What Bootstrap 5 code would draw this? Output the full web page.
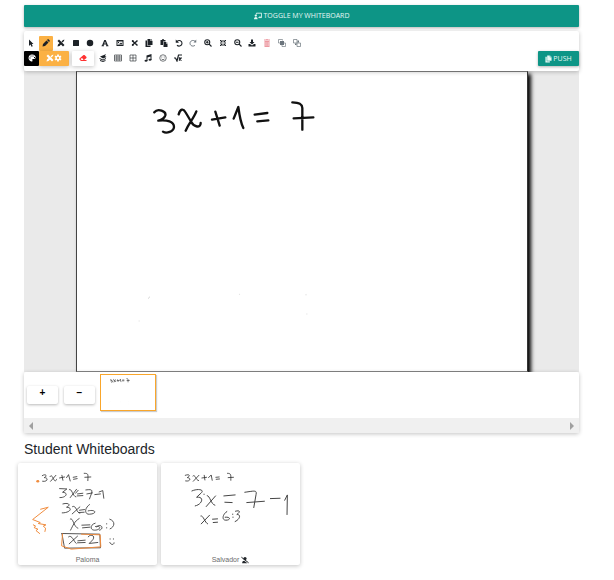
<!DOCTYPE html>
<html lang="en">
<head>
<meta charset="utf-8">
<meta name="viewport" content="width=device-width, initial-scale=1">
<title>Whiteboard</title>
<link href="https://cdn.jsdelivr.net/npm/bootstrap@5.3.0/dist/css/bootstrap.min.css" rel="stylesheet">
<style>
body{font-family:"Liberation Sans",Arial,sans-serif;font-size:7px;line-height:10px;color:#212529;background:#fff}
.page{padding:5px 35px 10px 24px}
.raised{box-shadow:0 1px 4px rgba(0,0,0,.24)}
.teal,.teal:hover{background:#0d9586;color:#e8f8f5;font-family:"Open Sans",sans-serif;font-size:7px;line-height:10px;border:0;border-radius:1px;box-shadow:0 1px 3px rgba(0,0,0,.3)}
.toggle{height:22px;gap:2px}
.push{height:15px;width:41px;gap:1px}
.ico{width:8px;height:8px;fill:currentColor;stroke:none;display:block;flex:none}
.push .ico{width:7px}
.panel{background:#fff;padding:5px 0;position:relative;z-index:1;border-radius:2px}
.tools{display:grid;grid-template-columns:repeat(19,minmax(0,1fr));width:280px}
.tool{height:15px;padding:0 0 2px;border:0;background:transparent;color:#1d2227;display:flex;align-items:center;justify-content:center;border-radius:1px}
.more{display:grid;grid-template-columns:repeat(6,minmax(0,1fr));width:89px;margin-left:2px}
.amber{background:#fbb144}
.wide{width:30px;color:#fff}
.black{width:15px;background:#000;color:#fff}
.erase{width:22px;margin-left:3px;background:#fff;color:#f33}
.stage{background:#eaeaea;padding:0 51px 0 52px;overflow:hidden}
.sheet{background:#fff;border:1px solid #858585;border-left-color:#444;border-right-color:#333;box-shadow:3px 3px 4px #000}
.ink{display:block;width:100%;height:auto;fill:none;stroke:#111;stroke-linecap:round;stroke-linejoin:round}
.strip{background:#fff;position:relative;z-index:1;border-radius:2px}
.pages{height:46px;padding:2px 3px;gap:5px}
.step{width:31px;height:18px;margin-top:12px;border:0;border-radius:2px;background:#fff;font-weight:700;font-size:10px;line-height:14px;padding:0 0 4px;box-shadow:0 1px 3px rgba(0,0,0,.28)}
.step + .step{margin-left:1px}
.thumb{width:56px;height:37px;padding:0;border:1px solid #f9a62b;background:#fff;box-shadow:1px 1px 1px rgba(0,0,0,.2)}
.scroller{height:15px;background:#f0f0f0;padding:0 3px}
.scroller button{border:0;background:none;padding:0;color:#a0a0a0}
.title{font-size:14px;line-height:17px;font-weight:400;color:#212529;margin:8px 0 5px}
.students{gap:4px;margin-left:-6px}
.student{width:139px;background:#fff;border-radius:2px;height:102px;overflow:hidden}
.who{color:#6b6b6b;height:12px;gap:2px}
</style>
<script src="https://cdn.jsdelivr.net/npm/bootstrap@5.3.0/dist/js/bootstrap.bundle.min.js"></script>
</head>
<body>
<svg class="d-none" aria-hidden="true">
<symbol id="i-pointer" viewBox="0 0 16 16"><path d="M4 1v13l3-3 2 4.500 2.500-1-2-4.500H13z"/></symbol>
<symbol id="i-pen" viewBox="0 0 16 16"><path d="M1 15l1-5 7-7 4 4-7 7zM10 2l1.500-1.500h1.500l2.500 2.500v1.500L14 6z"/></symbol>
<symbol id="i-tools" viewBox="0 0 16 16"><path d="M1 4l3-3 11 11-3 3zM1 15l1-4 3-3 3 3-3 3zM9 5l3-3h2v2l-3 3zM14 1l1 1-1 1-1-1z"/></symbol>
<symbol id="i-square" viewBox="0 0 16 16"><rect x="2" y="2" width="12" height="12" rx="1"/></symbol>
<symbol id="i-circle" viewBox="0 0 16 16"><circle cx="8" cy="8" r="6.500"/></symbol>
<symbol id="i-font" viewBox="0 0 16 16"><path d="M6.500 2h3L14 13h1v1.500h-5V13h1l-.8-2H5.800L5 13h1v1.500H1V13h1zM8 5l-1.500 4h3z"/></symbol>
<symbol id="i-image" viewBox="0 0 16 16"><path fill-rule="evenodd" d="M1 2h14v12H1zM3 5v7h10V5zM4 11l2-2 1 1 3-3 2 2v2zM4 6h2v2H4z"/></symbol>
<symbol id="i-cut" viewBox="0 0 16 16"><path d="M3 4l10 9M3 12l10-9" stroke="currentColor" stroke-width="3"/><circle cx="3.500" cy="4" r="2"/><circle cx="3.500" cy="12" r="2"/></symbol>
<symbol id="i-copy" viewBox="0 0 16 16"><path d="M5 0h6v4h4v8H5zM12 0l3 3h-3zM1 3h3v10h7v3H1z"/></symbol>
<symbol id="i-paste" viewBox="0 0 16 16"><path d="M1 2h3l1-2h2l1 2h3v3H6v7H1zM7 6h5v3h3v7H7zM13 6l2 2h-2z"/></symbol>
<symbol id="i-undo" viewBox="0 0 16 16"><path d="M3.500 5.500C9 .5 14 4.500 14 8.500c0 5-6 7.500-10 4" fill="none" stroke="currentColor" stroke-width="2.200"/><path d="M1.500 1v6.500H8z"/></symbol>
<symbol id="i-redo" viewBox="0 0 16 16"><path d="M12.500 5C8 .5 2 4 2 8.500c0 5 6 7.500 10 4" fill="none" stroke="currentColor" stroke-width="2"/><path d="M14.500 1v6H9z"/></symbol>
<symbol id="i-zin" viewBox="0 0 16 16"><g fill="none" stroke="currentColor" stroke-width="2.200"><circle cx="6.500" cy="6.500" r="5"/><path d="M10 10l5 5M4 6.500h5M6.500 4v5"/></g></symbol>
<symbol id="i-zout" viewBox="0 0 16 16"><g fill="none" stroke="currentColor" stroke-width="2.200"><circle cx="6.500" cy="6.500" r="5"/><path d="M10 10l5 5M4 6.500h5"/></g></symbol>
<symbol id="i-fit" viewBox="0 0 16 16"><path d="M2 2l4 4M14 2l-4 4M2 14l4-4M14 14l-4-4" stroke="currentColor" stroke-width="2"/><path d="M7 2v5H2V5.500h3V2zM9 2v5h5V5.500h-3V2zM7 14V9H2v1.500h3V14zM9 14V9h5v1.500h-3V14z"/></symbol>
<symbol id="i-down" viewBox="0 0 16 16"><path d="M6 1h4v5h3l-5 5-5-5h3zM1 10h3l4 3 4-3h3v5H1z"/></symbol>
<symbol id="i-trash" viewBox="0 0 16 16"><path fill-rule="evenodd" d="M2 1h4l1-1h2l1 1h4v2H2zM3 4h10v12H3zM5.500 6v8h.7V6zM7.700 6v8h.7V6zM10 6v8h.7V6z"/></symbol>
<symbol id="i-front" viewBox="0 0 16 16"><path fill="none" stroke="currentColor" stroke-width="1.300" d="M4 8H1V1h8v2M12 8h3v7H8v-3"/><path d="M4 4h8v8H4z"/></symbol>
<symbol id="i-back" viewBox="0 0 16 16"><path fill="none" stroke="currentColor" stroke-width="1.400" d="M1 1h7v7H1zM8 8h7v7H8z"/><path d="M9 3h3v4H9zM4 9h3v3H4z"/></symbol>
<symbol id="i-palette" viewBox="0 0 16 16"><path fill-rule="evenodd" d="M8 1c9 0 9 9 4 9-3 0-4 0-3 3 0 2-1 2-2 2C-2 13 0 1 8 1zM3 7v2h2V7zM5 3v2h2V3zM9 3v2h2V3zM12 6v2h2V6z"/></symbol>
<symbol id="i-gear" viewBox="0 0 16 16"><path d="M8 1v14M1.900 4.500l12.200 7M14.100 4.500l-12.200 7" stroke="currentColor" stroke-width="3.500"/><circle cx="8" cy="8" r="5"/><circle cx="8" cy="8" r="2.300" fill="#fbb144"/></symbol>
<symbol id="i-eraser" viewBox="0 0 16 16"><path fill-rule="evenodd" d="M1 9l8-7h2l4 4v2l-5 4h5v2H4L1 11zM3 10l2 2h3l1-1-3-3z"/></symbol>
<symbol id="i-layers" viewBox="0 0 16 16"><path d="M2 5l8-3 4-2-2 4 3 2-7 3zM1 8l7 3 6-3v2l-6 3-7-3zM2 12l6 2 5-2v2l-5 2-6-2z"/></symbol>
<symbol id="i-grid3" viewBox="0 0 16 16"><path fill="none" stroke="currentColor" stroke-width="1.200" d="M1 2h14v12H1zM1 6h14M1 10h14M5.700 2v12M10.300 2v12"/></symbol>
<symbol id="i-grid2" viewBox="0 0 16 16"><path fill="none" stroke="currentColor" stroke-width="1.200" d="M2 2h12v12H2zM2 8h12M8 2v12"/></symbol>
<symbol id="i-music" viewBox="0 0 16 16"><path d="M5 3l10-3v12H13V5L7 7v7H5z"/><ellipse cx="4" cy="13.500" rx="3" ry="2.200"/><ellipse cx="12" cy="11.500" rx="3" ry="2.200"/></symbol>
<symbol id="i-smile" viewBox="0 0 16 16"><g fill="none" stroke="currentColor" stroke-width="1.200"><circle cx="8" cy="8" r="6.500"/><path d="M5 10q3 3 6 0M5.500 5v2M10.500 5v2"/></g></symbol>
<symbol id="i-root" viewBox="0 0 16 16"><path fill="none" stroke="currentColor" stroke-width="2.400" d="M0 8h3l3 6 3-12h7M10 7l5 6M15 7l-5 6"/></symbol>
<symbol id="i-teach" viewBox="0 0 20 16"><path fill="none" stroke="currentColor" stroke-width="2.200" d="M6 4V1h13v11h-8"/><path d="M13 9h4v3h-4z"/><circle cx="4.500" cy="7" r="2.900"/><path d="M0 16c0-7 9-7 9 0z"/></symbol>
<symbol id="i-noteach" viewBox="0 0 20 16"><path fill="none" stroke="currentColor" stroke-width="2.500" d="M1 1l18 14"/><circle cx="10" cy="4.500" r="4"/><path d="M3 16c0-4 2-6 5-6l8 6z"/></symbol>
<symbol id="eq" viewBox="-159 -24 1350 897">
<path d="M73 97C84 83 109 95 106 106 103 115 94 120 85 122 112 119 132 125 132 141 131 155 109 162 99 155M146 103C151 86 160 85 166 96L184 126C192 142 212 145 212 129M199 94C192 113 177 130 167 152M246 119L286 112M256 95L269 137M311 116L325 81C328 104 332 128 340 144M374 104L412 99M382 124L415 121M487 67C508 68 516 71 517 84L517 149M491 115L550 112"/>
<g stroke="#bbb" stroke-width="3"><path d="M56 654l2-2"/><path stroke="#e1e1e1" d="M27 723h1M528 643v2M530 702h1M328 643h1"/></g>
</symbol>
</svg>

<main class="page">
<button class="btn teal toggle w-100 d-flex align-items-center justify-content-center p-0" type="button"><svg class="ico" aria-hidden="true"><use href="#i-teach"/></svg><span>TOGGLE MY WHITEBOARD</span></button>

<section class="panel raised mt-1">
<div class="tools">
<button class="tool" aria-label="Select"><svg class="ico"><use href="#i-pointer"/></svg></button>
<button class="tool amber" aria-label="Pencil"><svg class="ico"><use href="#i-pen"/></svg></button>
<button class="tool" aria-label="Design"><svg class="ico"><use href="#i-tools"/></svg></button>
<button class="tool" aria-label="Rectangle"><svg class="ico"><use href="#i-square"/></svg></button>
<button class="tool" aria-label="Circle"><svg class="ico"><use href="#i-circle"/></svg></button>
<button class="tool" aria-label="Text"><svg class="ico"><use href="#i-font"/></svg></button>
<button class="tool" aria-label="Image"><svg class="ico"><use href="#i-image"/></svg></button>
<button class="tool" aria-label="Cut"><svg class="ico"><use href="#i-cut"/></svg></button>
<button class="tool" aria-label="Copy"><svg class="ico"><use href="#i-copy"/></svg></button>
<button class="tool" aria-label="Paste"><svg class="ico"><use href="#i-paste"/></svg></button>
<button class="tool" aria-label="Undo"><svg class="ico"><use href="#i-undo"/></svg></button>
<button class="tool text-secondary" aria-label="Redo"><svg class="ico"><use href="#i-redo"/></svg></button>
<button class="tool" aria-label="Zoom in"><svg class="ico"><use href="#i-zin"/></svg></button>
<button class="tool" aria-label="Fit"><svg class="ico"><use href="#i-fit"/></svg></button>
<button class="tool" aria-label="Zoom out"><svg class="ico"><use href="#i-zout"/></svg></button>
<button class="tool" aria-label="Download"><svg class="ico"><use href="#i-down"/></svg></button>
<button class="tool text-danger opacity-50" aria-label="Delete"><svg class="ico"><use href="#i-trash"/></svg></button>
<button class="tool text-secondary" aria-label="Bring to front"><svg class="ico"><use href="#i-front"/></svg></button>
<button class="tool text-secondary" aria-label="Send to back"><svg class="ico"><use href="#i-back"/></svg></button>
</div>
<div class="d-flex">
<button class="tool black" aria-label="Colours"><svg class="ico"><use href="#i-palette"/></svg></button>
<button class="tool amber wide raised" aria-label="Pencil settings"><svg class="ico"><use href="#i-tools"/></svg><svg class="ico"><use href="#i-gear"/></svg></button>
<button class="tool erase raised" aria-label="Eraser"><svg class="ico"><use href="#i-eraser"/></svg></button>
<div class="more">
<button class="tool" aria-label="Backgrounds"><svg class="ico"><use href="#i-layers"/></svg></button>
<button class="tool" aria-label="Fine grid"><svg class="ico"><use href="#i-grid3"/></svg></button>
<button class="tool" aria-label="Coarse grid"><svg class="ico"><use href="#i-grid2"/></svg></button>
<button class="tool" aria-label="Music"><svg class="ico"><use href="#i-music"/></svg></button>
<button class="tool" aria-label="Emoji"><svg class="ico"><use href="#i-smile"/></svg></button>
<button class="tool" aria-label="Formula"><svg class="ico"><use href="#i-root"/></svg></button>
</div>
<button class="btn teal push ms-auto p-0 d-flex align-items-center justify-content-center" type="button"><svg class="ico" aria-hidden="true"><use href="#i-copy"/></svg><span>PUSH</span></button>
</div>
</section>

<section class="stage">
<div class="sheet"><svg class="ink" viewBox="-159 -24 1350 897" stroke-width="7" role="img" aria-label="3x+1=7"><use href="#eq" x="-159" y="-24" width="1350" height="897"/></svg></div>
</section>

<section class="strip raised">
<div class="pages d-flex">
<button class="step" type="button" aria-label="Add page">+</button>
<button class="step" type="button" aria-label="Remove page">−</button>
<button class="thumb" type="button" aria-label="Page 1"><svg class="ink" viewBox="-159 -24 1350 870" stroke-width="13"><use href="#eq" x="-159" y="-24" width="1350" height="897"/></svg></button>
</div>
<div class="scroller d-flex align-items-center justify-content-between">
<button type="button" aria-label="Scroll left"><svg class="ico" viewBox="0 0 8 8"><path d="M6 0v8L2 4z"/></svg></button>
<button type="button" aria-label="Scroll right"><svg class="ico" viewBox="0 0 8 8"><path d="M2 0v8l4-4z"/></svg></button>
</div>
</section>

<h1 class="title">Student Whiteboards</h1>
<section class="students d-flex flex-wrap">
<article class="student raised">
<svg class="ink" viewBox="24 24 418 273" role="img" aria-label="Paloma's whiteboard">
<g stroke="#333" stroke-width="2.500">
<path d="M97 62C108 55 113 63 103 68 117 68 113 82 98 79M120 65C126 57 128 68 132 74 135 80 139 78 140 73M138 61L122 79M149 69L164 66M156 61L159 76M170 68L176 59 181 78M190 67L201 65M191 73L202 71M223 55C236 55 235 57 234 77M225 67L243 66"/>
<path d="M149 101L171 102 158 112C177 113 169 129 150 128M178 104C185 97 189 126 198 126M200 103L181 128M197 115L205 106M203 117L219 115M202 123L219 122M228 105C252 102 249 105 239 132M231 117L248 114M255 119L272 117M268 111L279 107 282 130"/>
<path d="M159 147C176 142 185 150 170 157 190 158 182 174 157 174M188 155C200 149 199 175 210 175M210 156L187 177M209 166L224 164M207 173L223 172M239 149C221 162 226 180 239 178 263 177 259 162 235 168"/>
<path d="M181 193C189 184 191 217 204 220M208 191C193 200 190 211 182 226M216 211L240 210M218 219L240 217M256 205C241 209 239 225 254 226 274 226 275 210 257 215M261 216C272 203 286 222 269 226M290 207h1M290 219h1M300 193C318 199 315 216 301 222"/>
<path d="M176 246C186 237 193 263 199 266M203 244L178 267M204 258L226 256M203 264L226 263M235 246C244 234 261 245 245 259L238 266 264 263M156 236L270 238 272 279 164 280 156 236M301 252v1M311 252v1M300 263C303 271 313 271 313 264"/>
</g>
<g stroke="#f08c3d" stroke-width="3"><path stroke-width="8" d="M83 79h1"/><path d="M92 163L115 157 68 194 91 203 85 206 108 210 100 214 107 220 105 230M70 210L77 214 72 218 84 223 78 227 89 236M158 237L155 273 184 283 273 276 271 240 215 238"/></g>
</svg>
<div class="who d-flex align-items-center justify-content-center">Paloma</div>
</article>
<article class="student raised">
<svg class="ink" viewBox="18 24 418 273" role="img" aria-label="Salvador's whiteboard">
<g stroke="#333" stroke-width="2.500">
<path d="M91 61C105 56 107 63 97 68 110 69 106 81 92 78M114 63C121 56 122 76 131 77M132 61L115 79M141 69L155 67M148 61L150 75M161 68L169 60 172 76M183 67L193 66M184 73L194 72M218 55C230 55 228 60 228 76M220 68L236 67"/>
</g><g stroke="#444" stroke-width="3">
<path d="M111 108C128 100 150 104 139 114L125 127C150 124 142 149 121 153M147 118h1M157 122C165 121 168 149 180 151M182 123L154 155M207 123L241 120M210 142L232 143M270 112C298 108 307 105 304 118L297 158M276 143L329 139M347 131L376 130M390 136L398 120 397 179"/>
<path d="M138 183C145 180 150 204 158 207M164 181L139 207M173 193L188 192M175 203L188 202M216 170C203 178 200 196 213 196 228 196 228 185 211 187M233 178h1M234 187h1M242 169C257 165 257 171 246 179 260 178 255 194 241 200"/>
</g></svg>
<div class="who d-flex align-items-center justify-content-center"><span>Salvador</span><svg class="ico text-dark" aria-hidden="true"><use href="#i-noteach"/></svg></div>
</article>
</section>
</main>
</body>
</html>
